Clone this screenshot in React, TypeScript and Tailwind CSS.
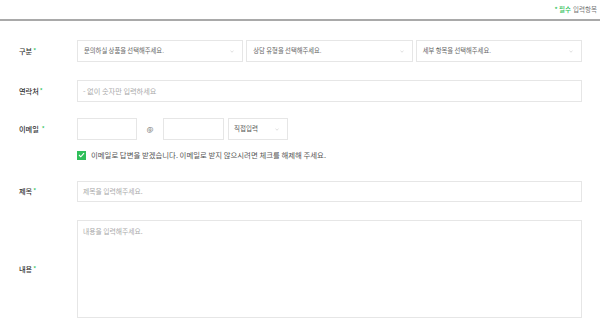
import React from 'react';

const font = { fontFamily: '"Noto Sans CJK KR", "Noto Sans", sans-serif' };

function Chevron() {
    return (
        <svg width="4" height="3" viewBox="0 0 4 3" className="shrink-0">
            <path d="M0.5 0.8 L2 2.2 L3.5 0.8" fill="none" stroke="#c8c8c8" strokeWidth="0.6" />
        </svg>
    );
}

function Label({ text, spaced = false }: { text: string; spaced?: boolean }) {
    return (
        <div className="w-[77px] shrink-0 pl-[19px] text-[7.2px] font-medium text-[#333] flex items-center">
            <span>{text}</span>
            <span className={`text-[#2fbf5a] text-[6px] ${spaced ? 'ml-[3px]' : 'ml-[1px]'} -mt-[2px]`}>*</span>
        </div>
    );
}

function SelectBox({ text }: { text: string }) {
    return (
        <div className="h-[22px] border border-[#e6e6e6] bg-white flex items-center justify-between pl-[6px] pr-[8px] text-[6.3px] text-[#666]">
            <span>{text}</span>
            <Chevron />
        </div>
    );
}

export default function App() {
    return (
        <div className="w-[600px] h-[327px] bg-white overflow-hidden" style={font}>
            <div className="h-[21px] flex items-center justify-end pr-[3px] text-[6.5px] border-b-2 border-[#a9a9a9]">
                <span className="text-[#2fbf5a] font-medium">* 필수</span>
                <span className="text-[#777] ml-[2px]">입력항목</span>
            </div>

            {/* 구분 */}
            <div className="flex mt-[19px] h-[22px]">
                <Label text="구분" />
                <div className="w-[505px] grid grid-cols-3 gap-[3px]">
                    <SelectBox text="문의하실 상품을 선택해주세요." />
                    <SelectBox text="상담 유형을 선택해주세요." />
                    <SelectBox text="세부 항목을 선택해주세요." />
                </div>
            </div>

            {/* 연락처 */}
            <div className="flex mt-[18px] h-[22px]">
                <Label text="연락처" />
                <div className="w-[505px] border border-[#e6e6e6] flex items-center pl-[5px] text-[7.2px] text-[#aaa]">
                    - 없이 숫자만 입력하세요
                </div>
            </div>

            {/* 이메일 */}
            <div className="flex mt-[16px] h-[22px]">
                <Label text="이메일" spaced />
                <div className="flex items-center">
                    <div className="w-[60px] h-[22px] border border-[#e6e6e6]" />
                    <div className="w-[26px] text-center text-[7px] text-[#666]">@</div>
                    <div className="w-[61px] h-[22px] border border-[#e6e6e6]" />
                    <div className="w-[60px] h-[22px] ml-[4px] border border-[#e6e6e6] flex items-center justify-between pl-[5px] pr-[8px] text-[6.5px] text-[#555]">
                        <span>직접입력</span>
                        <Chevron />
                    </div>
                </div>
            </div>

            {/* 수신 동의 */}
            <div className="flex items-center mt-[10px] h-[10px] pl-[77px]">
                <div className="w-[9px] h-[9px] bg-[#2fbf5a] flex items-center justify-center">
                    <svg width="7" height="6" viewBox="0 0 7 6">
                        <path d="M1 3 L2.8 4.8 L6 1.2" fill="none" stroke="#fff" strokeWidth="1.1" />
                    </svg>
                </div>
                <span className="ml-[5px] text-[7.4px] text-[#555]">
                    이메일로 답변을 받겠습니다. 이메일로 받지 않으시려면 체크를 해제해 주세요.
                </span>
            </div>

            {/* 제목 */}
            <div className="flex mt-[21px] h-[21px]">
                <Label text="제목" />
                <div className="w-[505px] border border-[#e6e6e6] flex items-center pl-[5px] text-[6.8px] text-[#aaa]">
                    제목을 입력해주세요.
                </div>
            </div>

            {/* 내용 */}
            <div className="flex mt-[18px] h-[98px]">
                <Label text="내용" />
                <div className="w-[505px] border border-[#e6e6e6] pl-[5px] pt-[5px] text-[6.8px] text-[#aaa]">
                    내용을 입력해주세요.
                </div>
            </div>
        </div>
    );
}
